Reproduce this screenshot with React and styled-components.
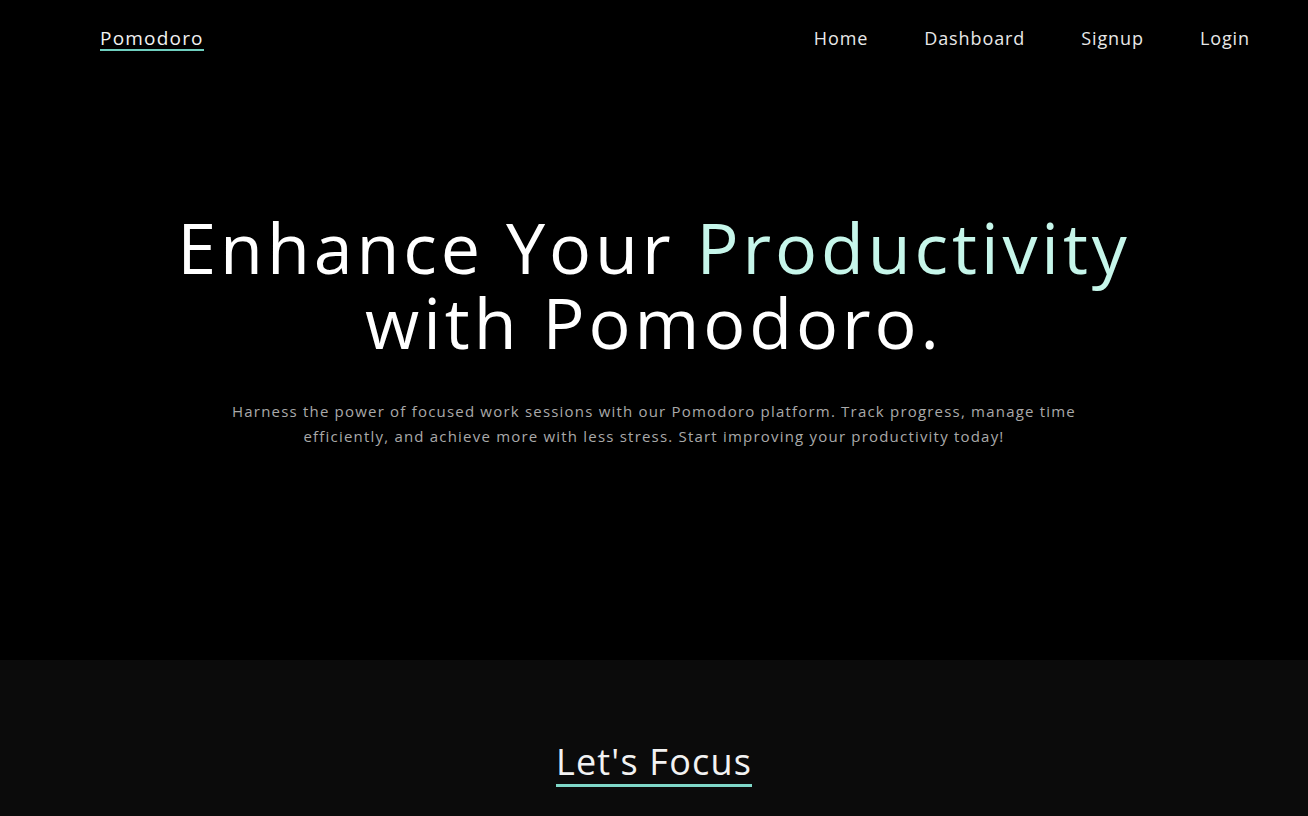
import React from 'react';
import styled, { createGlobalStyle } from 'styled-components';

const GlobalStyle = createGlobalStyle`
  html, body {
    margin: 0;
    padding: 0;
    background: #000;
  }
  body {
    font-family: 'Open Sans', 'Liberation Sans', sans-serif;
    color: #fff;
  }
`;

const Page = styled.div`
  min-height: 816px;
  background: #000;
`;

const Nav = styled.nav`
  height: 76px;
  display: flex;
  align-items: center;
  justify-content: space-between;
  padding: 0 58px 0 100px;
`;

const Brand = styled.a`
  font-size: 19px;
  letter-spacing: 1.2px;
  color: #f2f2f2;
  text-decoration: none;
  border-bottom: 2px solid #6fcfbf;
  line-height: 22px;
  margin-top: 2px;
`;

const Links = styled.ul`
  display: flex;
  gap: 56px;
  list-style: none;
  margin: 0;
  padding: 0;
`;

const LinkItem = styled.li`
  font-size: 18px;
  letter-spacing: 0.9px;
  color: #e8e8e8;
  cursor: pointer;
`;

const Hero = styled.section`
  height: 584px;
  display: flex;
  flex-direction: column;
  align-items: center;
  padding-top: 134px;
  box-sizing: border-box;
`;

const Title = styled.h1`
  margin: 0;
  font-weight: 400;
  font-size: 70px;
  line-height: 75px;
  text-align: center;
  color: #fff;
  letter-spacing: 3.9px;

  span {
    color: #c6f6ea;
  }
`;

const Lead = styled.p`
  margin: 39px 0 0;
  max-width: 870px;
  text-align: center;
  font-size: 15px;
  line-height: 25px;
  letter-spacing: 1.2px;
  color: #a9a9a9;
`;

const FocusSection = styled.section`
  background: #0b0b0b;
  height: 156px;
  display: flex;
  justify-content: center;
  padding-top: 82px;
  box-sizing: border-box;
`;

const SectionTitle = styled.h2`
  margin: 0;
  height: 42px;
  font-weight: 400;
  font-size: 36px;
  line-height: 40px;
  letter-spacing: 1.2px;
  color: #f2f2f2;
  border-bottom: 3px solid #7fd8c8;
`;

export default function App() {
  return (
    <Page>
      <GlobalStyle />
      <Nav>
        <Brand href="#">Pomodoro</Brand>
        <Links>
          <LinkItem>Home</LinkItem>
          <LinkItem>Dashboard</LinkItem>
          <LinkItem>Signup</LinkItem>
          <LinkItem>Login</LinkItem>
        </Links>
      </Nav>
      <Hero>
        <Title>
          Enhance Your <span>Productivity</span>
          <br />
          with Pomodoro.
        </Title>
        <Lead>
          Harness the power of focused work sessions with our Pomodoro platform. Track progress, manage time
          efficiently, and achieve more with less stress. Start improving your productivity today!
        </Lead>
      </Hero>
      <FocusSection>
        <SectionTitle>Let's Focus</SectionTitle>
      </FocusSection>
    </Page>
  );
}
